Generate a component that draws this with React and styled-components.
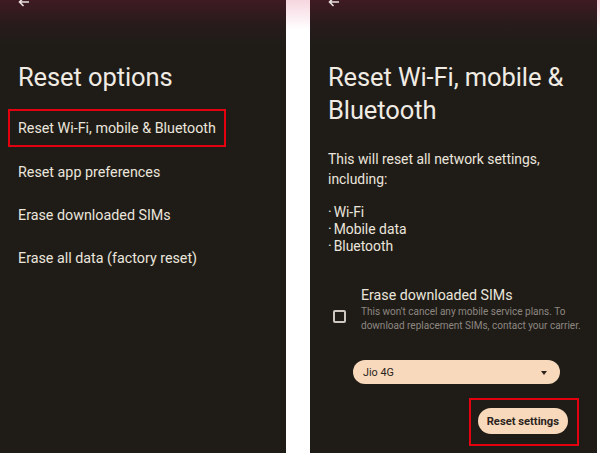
import React from "react";
import styled, { createGlobalStyle } from "styled-components";

const Global = createGlobalStyle`
  body {
    margin: 0;
    background: #ffffff;
    font-family: Roboto, "Open Sans", sans-serif;
  }
`;

const Page = styled.div`
  width: 600px;
  height: 453px;
  display: flex;
  background: linear-gradient(to bottom, #f6d6df 0, #ffffff 30px);
  overflow: hidden;
`;

const Screen = styled.div`
  width: ${(p) => p.w}px;
  margin-right: ${(p) => p.gap || 0}px;
  height: 453px;
  box-sizing: border-box;
  padding: 0 0 0 18px;
  background: linear-gradient(to bottom, #3f1a23 0, #2a1b1c 22px, #1f1c18 44px);
  color: #ebe5dc;
  display: flex;
  flex-direction: column;
  overflow: hidden;
`;

const Back = styled.div`
  height: 10px;
  margin-top: -3px;
  color: #e8e0e0;
  display: flex;
  align-items: flex-end;
`;

const Title = styled.h1`
  margin: ${(p) => p.mt}px 0 0;
  font-size: 25.5px;
  line-height: 33px;
  font-weight: 400;
  letter-spacing: -0.1px;
  color: #f0ebe3;
`;

const Menu = styled.div`
  display: flex;
  flex-direction: column;
  align-items: flex-start;
  margin-top: 15px;
`;

const MenuItem = styled.div`
  font-size: 14.3px;
  line-height: 17px;
  box-sizing: border-box;
  display: flex;
  align-items: center;
  margin-left: -10px;
  padding: 0 ${(p) => (p.marked ? 8 : 10)}px;
  border: ${(p) => (p.marked ? "2px solid #e3000f" : "none")};
  height: ${(p) => (p.marked ? 38 : 42.7)}px;
  margin-bottom: ${(p) => (p.marked ? 4.5 : 0)}px;
`;

const Para = styled.p`
  margin: ${(p) => p.mt || 0}px 0 0;
  font-size: 13.9px;
  line-height: ${(p) => p.lh || 20}px;
  color: #ebe5dc;
`;

const Dot = styled.span`
  margin-right: 2px;
`;

const Option = styled.div`
  display: flex;
  align-items: center;
  margin-top: 30px;
  gap: 15px;
  padding-left: 5px;
`;

const Check = styled.div`
  width: 9px;
  height: 9px;
  border: 2px solid #cfc8c0;
  border-radius: 2px;
  flex: none;
  margin-top: 15px;
`;

const OptionText = styled.div`
  display: flex;
  flex-direction: column;
`;

const OptionTitle = styled.div`
  font-size: 14.2px;
  line-height: 20px;
  color: #ebe5dc;
`;

const OptionHint = styled.div`
  font-size: 10px;
  line-height: 14px;
  color: #8d8780;
  width: 232px;
`;

const Select = styled.div`
  margin: 27px 0 0 25px;
  width: 207px;
  height: 24px;
  border-radius: 12px;
  background: #f8d9bb;
  color: #2b231c;
  font-size: 10.8px;
  display: flex;
  align-items: center;
  justify-content: space-between;
  padding: 0 10px;
  box-sizing: border-box;
`;

const Caret = styled.span`
  width: 0;
  height: 0;
  border-left: 3.5px solid transparent;
  border-right: 3.5px solid transparent;
  border-top: 4px solid #2b231c;
  margin-top: 2px;
  margin-right: 3px;
`;

const Actions = styled.div`
  display: flex;
  justify-content: flex-end;
  margin: 14px 18px 0 0;
`;

const Marker = styled.div`
  border: 2px solid #e3000f;
  padding: 8px 9px 10px 7px;
  display: flex;
`;

const Button = styled.div`
  height: 26px;
  border-radius: 13px;
  background: #f8d9bb;
  color: #2b231c;
  font-size: 11.2px;
  font-weight: 700;
  padding: 0 9px;
  display: flex;
  align-items: center;
`;

const Arrow = () => (
  <svg width="12" height="10" viewBox="0 0 12 10" fill="none">
    <path d="M11 5H1.5M5.5 1L1.5 5l4 4" stroke="currentColor" strokeWidth="1.6" />
  </svg>
);

export default function App() {
  return (
    <>
      <Global />
      <Page>
        <Screen w={286} gap={24}>
          <Back>
            <Arrow />
          </Back>
          <Title mt={54}>Reset options</Title>
          <Menu>
            <MenuItem marked>Reset Wi-Fi, mobile &amp; Bluetooth</MenuItem>
            <MenuItem>Reset app preferences</MenuItem>
            <MenuItem>Erase downloaded SIMs</MenuItem>
            <MenuItem>Erase all data (factory reset)</MenuItem>
          </Menu>
        </Screen>
        <Screen w={287}>
          <Back>
            <Arrow />
          </Back>
          <Title mt={54}>
            Reset Wi-Fi, mobile &amp;
            <br />
            Bluetooth
          </Title>
          <Para mt={22}>
            This will reset all network settings,
            <br />
            including:
          </Para>
          <Para mt={15} lh={17}>
            <Dot>·</Dot>Wi-Fi
            <br />
            <Dot>·</Dot>Mobile data
            <br />
            <Dot>·</Dot>Bluetooth
          </Para>
          <Option>
            <Check />
            <OptionText>
              <OptionTitle>Erase downloaded SIMs</OptionTitle>
              <OptionHint>
                This won't cancel any mobile service plans. To download replacement SIMs, contact your carrier.
              </OptionHint>
            </OptionText>
          </Option>
          <Select>
            Jio 4G
            <Caret />
          </Select>
          <Actions>
            <Marker>
              <Button>Reset settings</Button>
            </Marker>
          </Actions>
        </Screen>
      </Page>
    </>
  );
}
